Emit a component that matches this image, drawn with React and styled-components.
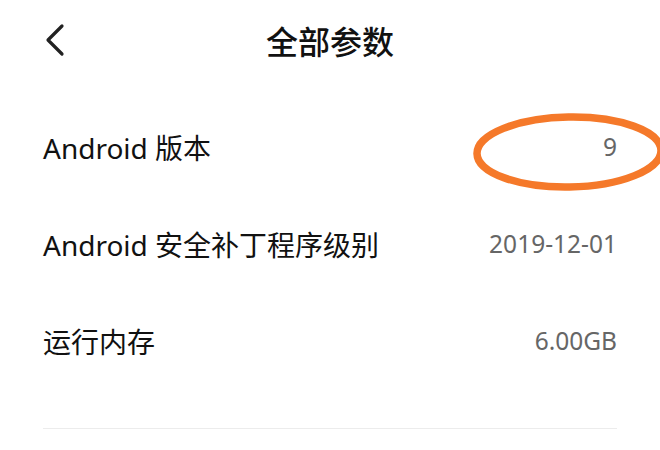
import React from "react";
import styled, { createGlobalStyle } from "styled-components";

const Global = createGlobalStyle`
  html, body { margin: 0; padding: 0; background: #fff; }
  body { font-family: "Noto Sans", "Noto Sans CJK SC", sans-serif; }
`;

const Page = styled.div`
  position: relative;
  width: 660px;
  height: 450px;
  overflow: hidden;
  background: #fff;
`;

const Header = styled.header`
  position: relative;
  height: 80px;
  display: flex;
  align-items: center;
  justify-content: center;
`;

const BackButton = styled.button`
  position: absolute;
  left: 40px;
  top: 20px;
  width: 30px;
  height: 40px;
  padding: 0;
  border: 0;
  background: none;
  display: flex;
  align-items: center;
  justify-content: center;
`;

const Title = styled.h1`
  margin: 0;
  font-family: "Noto Sans CJK SC", sans-serif;
  font-size: 32px;
  font-weight: 500;
  color: #111;
  line-height: 1;
`;

const List = styled.div`
  margin-top: 18px;
  padding: 0 43px 0 43px;
`;

const Row = styled.div`
  position: relative;
  height: 97px;
  display: flex;
  align-items: center;
  justify-content: space-between;
`;

const Label = styled.span`
  font-family: "Noto Sans", "Noto Sans CJK SC", sans-serif;
  font-size: 28px;
  color: #111;
`;

const Value = styled.span`
  font-family: "Noto Sans", "Noto Sans CJK SC", sans-serif;
  font-size: 24.5px;
  color: #666;
`;

const Divider = styled.div`
  margin-top: 39px;
  height: 1px;
  background: #ececec;
`;

const Mark = styled.svg`
  position: absolute;
  left: 460px;
  top: 102px;
  pointer-events: none;
`;

const rows = [
  ["Android 版本", "9"],
  ["Android 安全补丁程序级别", "2019-12-01"],
  ["运行内存", "6.00GB"],
];

export default function App() {
  return (
    <Page>
      <Global />
      <Header>
        <BackButton aria-label="返回">
          <svg width="24" height="36" viewBox="0 0 24 36">
            <polyline
              points="19,4 5,18 19,32"
              fill="none"
              stroke="#222"
              strokeWidth="3.2"
              strokeLinecap="round"
              strokeLinejoin="round"
            />
          </svg>
        </BackButton>
        <Title>全部参数</Title>
      </Header>
      <List>
        {rows.map(([l, v]) => (
          <Row key={l}>
            <Label>{l}</Label>
            <Value>{v}</Value>
          </Row>
        ))}
        <Divider />
      </List>
      <Mark width="220" height="100" viewBox="0 0 220 100">
        <ellipse
          cx="109"
          cy="50"
          rx="92"
          ry="35"
          fill="none"
          stroke="#F5792A"
          strokeWidth="7.5"
          transform="rotate(-1 109 50)"
        />
      </Mark>
    </Page>
  );
}
